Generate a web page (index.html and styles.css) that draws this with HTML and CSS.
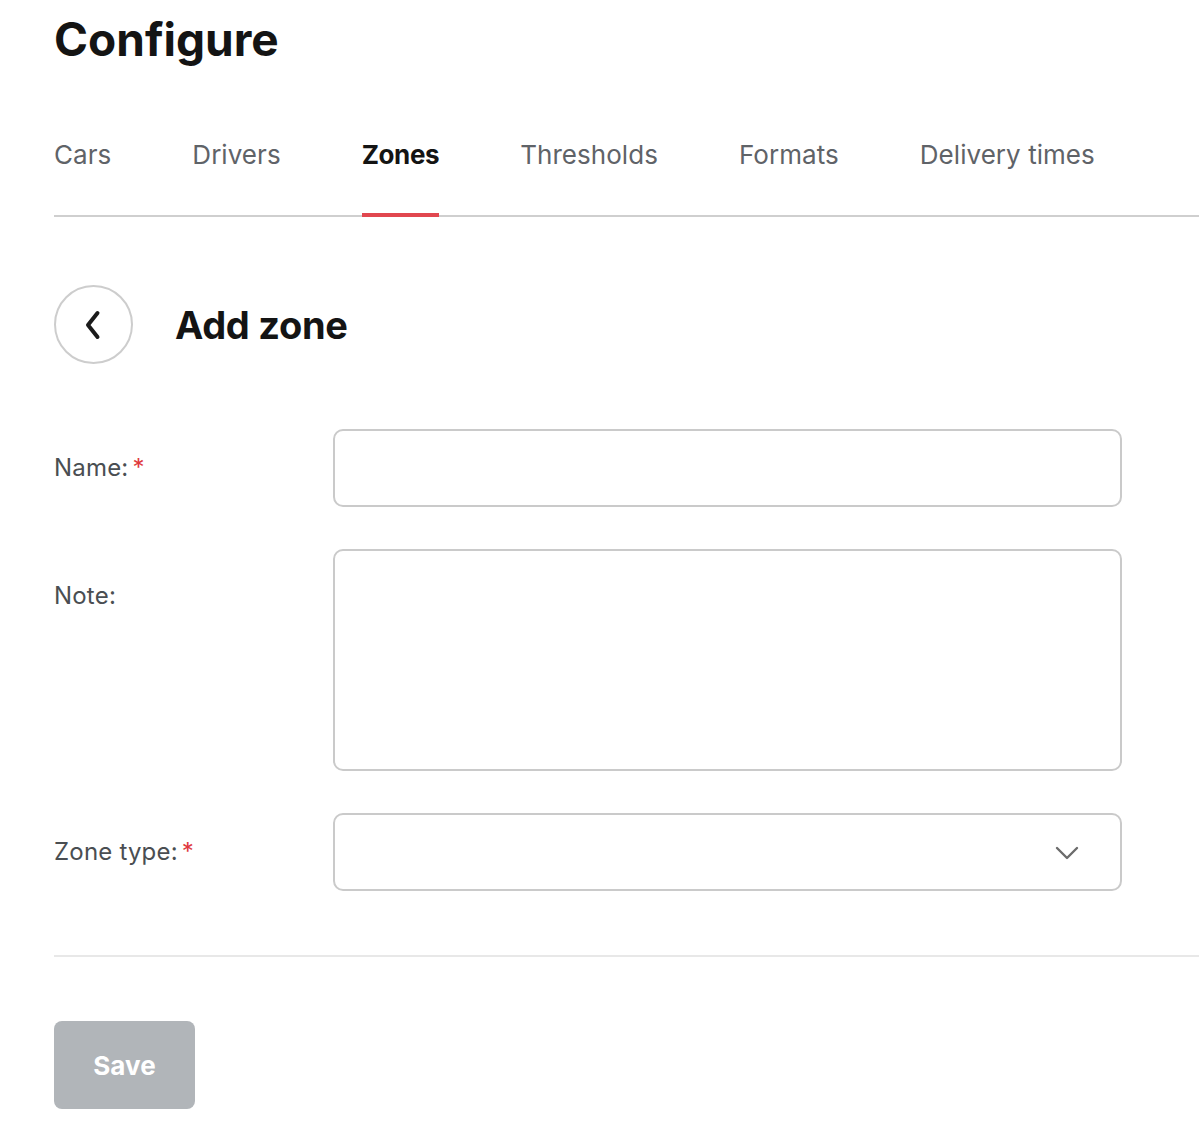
FILE: index.html
```html
<!DOCTYPE html>
<html lang="en">
<head>
<meta charset="utf-8">
<title>Configure – Add zone</title>
<link rel="stylesheet" href="styles.css">
</head>
<body>
<main class="page">
  <h1 class="page-title">Configure</h1>

  <nav class="tabs">
    <a class="tab" href="#">Cars</a>
    <a class="tab" href="#">Drivers</a>
    <a class="tab tab--active" href="#">Zones</a>
    <a class="tab" href="#">Thresholds</a>
    <a class="tab" href="#">Formats</a>
    <a class="tab" href="#">Delivery times</a>
  </nav>

  <header class="section-head">
    <button class="back-btn" type="button" aria-label="Back">
      <svg width="18" height="30" viewBox="0 0 18 30" fill="none">
        <path d="M13.5 3 L4 15 L13.5 27" stroke="#1b1b1b" stroke-width="4" stroke-linecap="round" stroke-linejoin="round"/>
      </svg>
    </button>
    <h2 class="section-title">Add zone</h2>
  </header>

  <form class="form">
    <div class="field">
      <label class="field-label" for="name">Name:<span class="req">*</span></label>
      <input class="control" id="name" type="text">
    </div>
    <div class="field">
      <label class="field-label field-label--tall" for="note">Note:</label>
      <textarea class="control control--area" id="note"></textarea>
    </div>
    <div class="field">
      <label class="field-label" for="type">Zone type:<span class="req">*</span></label>
      <div class="control control--select" id="type">
        <svg class="select-arrow" width="24" height="14" viewBox="0 0 24 14" fill="none">
          <path d="M2 2 L12 12 L22 2" stroke="#6c6c6c" stroke-width="2.4" stroke-linecap="round" stroke-linejoin="round"/>
        </svg>
      </div>
    </div>
  </form>

  <hr class="divider">

  <button class="save-btn" type="button" disabled>Save</button>
</main>
</body>
</html>
```

FILE: styles.css
```css
* {
  box-sizing: border-box;
}

html, body {
  margin: 0;
  padding: 0;
  background: #ffffff;
}

body {
  font-family: "Inter", "Noto Sans", "Liberation Sans", sans-serif;
  color: #141414;
}

.page {
  padding: 11px 0 0 54px;
}

.page-title {
  margin: 0;
  font-size: 46px;
  line-height: 56px;
  font-weight: 700;
  letter-spacing: 0;
  color: #141414;
}

/* tab strip */
.tabs {
  display: flex;
  gap: 81px;
  margin-top: 72px;
  border-bottom: 2px solid #cfcfcf;
}

.tab {
  display: block;
  padding-bottom: 42px;
  margin-bottom: -2px;
  border-bottom: 4px solid transparent;
  font-size: 26px;
  line-height: 32px;
  letter-spacing: 0.05px;
  color: #5f6368;
  text-decoration: none;
}

.tab--active {
  font-weight: 700;
  letter-spacing: -0.4px;
  color: #141414;
  border-bottom-color: #e1474f;
}

/* section heading with back button */
.section-head {
  display: flex;
  align-items: center;
  gap: 42px;
  margin-top: 68px;
}

.back-btn {
  width: 79px;
  height: 79px;
  border-radius: 50%;
  border: 2px solid #cdcdcd;
  background: #ffffff;
  display: flex;
  align-items: center;
  justify-content: center;
  padding: 0 2px 0 0;
  cursor: pointer;
}

.section-title {
  margin: 0;
  font-size: 38px;
  line-height: 48px;
  font-weight: 700;
  letter-spacing: -0.3px;
  color: #141414;
}

/* form */
.form {
  margin-top: 65px;
  display: flex;
  flex-direction: column;
  gap: 42px;
  padding-right: 77px;
}

.field {
  display: flex;
  align-items: flex-start;
}

.field-label {
  flex: 0 0 279px;
  font-size: 24px;
  line-height: 78px;
  letter-spacing: 0.2px;
  color: #4a4e52;
}

.field-label--tall {
  padding-top: 8px;
}

.req {
  color: #e0393e;
  margin-left: 4px;
}

.control {
  flex: 1 1 auto;
  display: block;
  height: 78px;
  border: 2px solid #cacaca;
  border-radius: 10px;
  background: #ffffff;
  font: inherit;
  padding: 0 20px;
  margin: 0;
}

.control--area {
  height: 222px;
  resize: none;
}

.control--select {
  display: flex;
  align-items: center;
  justify-content: flex-end;
  padding-right: 41px;
}

.select-arrow {
  margin-top: 2px;
}

.divider {
  margin: 64px 0 0;
  border: 0;
  border-top: 2px solid #e8e8e8;
}

.save-btn {
  display: block;
  margin-top: 64px;
  width: 141px;
  height: 88px;
  border: 0;
  border-radius: 8px;
  background: #b1b5b9;
  color: #ffffff;
  font-family: "Inter", "Noto Sans", "Liberation Sans", sans-serif;
  font-size: 26px;
  font-weight: 700;
}
```
